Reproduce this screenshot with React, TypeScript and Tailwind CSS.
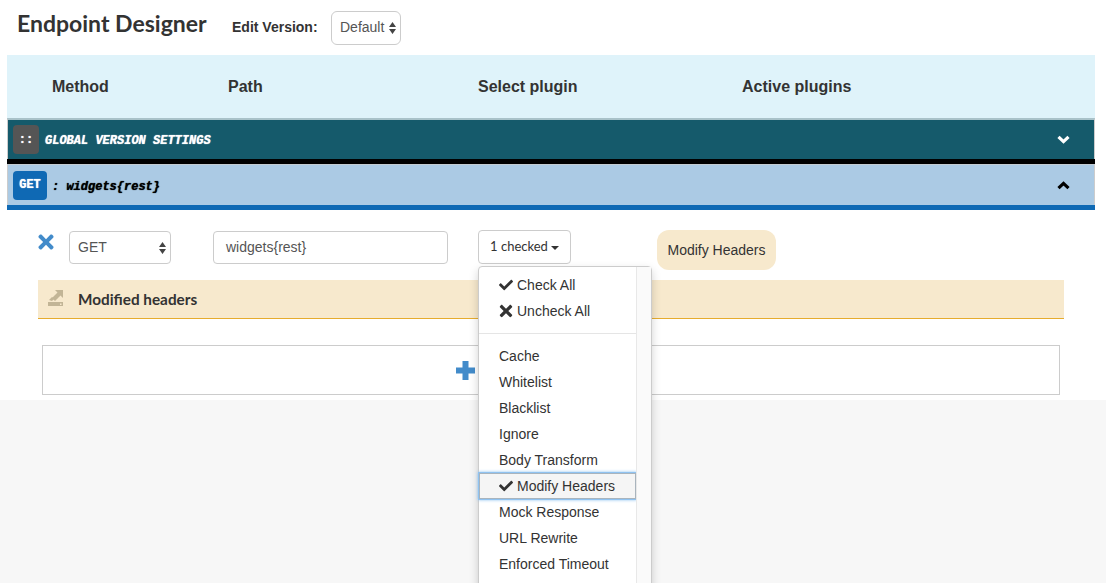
import { FaCheck, FaTimes } from "react-icons/fa";

const plugins = ["Cache", "Whitelist", "Blacklist", "Ignore", "Body Transform"];
const morePlugins = ["Mock Response", "URL Rewrite", "Enforced Timeout"];

function SelectArrows() {
  return (
    <svg width="7" height="12" viewBox="0 0 7 12" className="text-[#444]">
      <path d="M3.5 0 7 5H0z M0 7h7l-3.5 5z" fill="currentColor" />
    </svg>
  );
}

function Chevron({ up, color }: { up?: boolean; color: string }) {
  return (
    <svg width="13" height="9" viewBox="0 0 13 9">
      <path d={up ? "M1.5 7.2 6.5 2.4l5 4.8" : "M1.5 1.8l5 4.8 5-4.8"} fill="none" stroke={color} strokeWidth="3.2" />
    </svg>
  );
}

function PluginMenu() {
  return (
    <div className="absolute left-0 top-[36px] z-10 flex h-[400px] w-[174px] rounded-t-[4px] border border-[#ccc] bg-white text-[14px] leading-[26px] text-[#333] shadow-[0_4px_10px_rgba(0,0,0,0.18)]">
      <div className="w-[157px] pt-[5px]">
        <div className="flex items-center pl-[20px]">
          <FaCheck className="mr-[4px] h-[14px] w-[14px]" />
          Check All
        </div>
        <div className="flex items-center pl-[20px]">
          <FaTimes className="mr-[4px] h-[18px] w-[14px]" />
          Uncheck All
        </div>
        <div className="mb-[9px] mt-[9px] h-px bg-[#e5e5e5]" />
        {plugins.map((name) => (
          <div key={name} className="pl-[20px]">{name}</div>
        ))}
        <div className="flex h-[26px] items-center bg-[#f5f5f5] pl-[20px] shadow-[inset_0_0_0_1px_#a9b4bd,0_0_0_1px_#8fc2f0,0_0_3px_1px_#8fc2f0]">
          <FaCheck className="mr-[4px] h-[14px] w-[14px]" />
          Modify Headers
        </div>
        {morePlugins.map((name) => (
          <div key={name} className="pl-[20px]">{name}</div>
        ))}
      </div>
      <div className="flex-1 border-l border-[#e8e8e8] bg-[#fafafa]" />
    </div>
  );
}

export default function App() {
  return (
    <div className="h-[583px] overflow-hidden bg-[#f7f7f7] font-['Liberation_Sans',Arial,sans-serif] text-[#333]">
      <div className="h-[400px] bg-white">
        <div className="flex h-[55px] items-center pl-[17px]">
          <h1 className="w-[215px] pb-[9px] font-['Lato',sans-serif] text-[23px] font-bold text-[#333]">Endpoint Designer</h1>
          <span className="w-[99px] text-[14px] font-bold">Edit Version:</span>
          <div className="flex h-[34px] w-[70px] items-center justify-between rounded-[6px] border border-[#ccc] pl-[8px] pr-[4px] text-[14px] text-[#555]">
            Default
            <SelectArrows />
          </div>
        </div>

        <div className="mx-[7px] w-[1088px]">
          <div className="flex h-[63px] items-center bg-[#dff3fa] pl-[45px] pt-[1px] text-[16px] font-bold">
            <span className="w-[176px]">Method</span>
            <span className="w-[250px]">Path</span>
            <span className="w-[264px]">Select plugin</span>
            <span>Active plugins</span>
          </div>

          <div className="flex h-[41px] items-center border-x border-t-2 border-x-[#ccc] border-t-[#a9c2c9] bg-[#155a6b] pl-[5px] pr-[24px] font-['Liberation_Mono',monospace] text-[12px] font-bold italic text-white [text-shadow:0_0_1px_#fff]">
            <span className="mr-[6px] flex h-[29px] w-[26px] items-center justify-center rounded-[4px] bg-[#555] not-italic">::</span>
            <span className="flex-1 pt-[3px]">GLOBAL VERSION SETTINGS</span>
            <Chevron color="#fff" />
          </div>
          <div className="h-[5px] bg-black" />

          <div className="flex h-[41px] items-center border-x border-t border-x-[#ccc] border-t-[#c4ccd2] bg-[#abcae4] pl-[5px] pr-[24px] font-['Liberation_Mono',monospace] text-[12px] font-bold italic text-black [text-shadow:0_0_1px_#000]">
            <span className="mr-[5px] flex h-[29px] w-[34px] items-center justify-center rounded-[4px] bg-[#0f69b4] not-italic text-white [text-shadow:0_0_1px_#fff]">GET</span>
            <span className="flex-1 pt-[4px]">: widgets{"{rest}"}</span>
            <Chevron up color="#000" />
          </div>
          <div className="h-[5px] bg-[#0f69b4]" />

          <div className="px-[31px] pt-[20px]">
            <div className="flex h-[50px] items-start text-[14px]">
              <FaTimes className="mr-[15px] mt-[1px] h-[22px] w-[16px] text-[#428bca]" />
              <div className="mr-[42px] mt-px flex h-[33px] w-[102px] items-center justify-between rounded-[4px] border border-[#ccc] pl-[8px] pr-[4px] text-[#555]">
                GET
                <SelectArrows />
              </div>
              <div className="mr-[30px] mt-px flex h-[33px] w-[235px] items-center rounded-[4px] border border-[#ccc] pl-[12px] text-[#555]">
                widgets{"{rest}"}
              </div>
              <div className="relative mr-[86px]">
                <div className="flex h-[34px] w-[93px] items-center justify-center rounded-[4px] border border-[#ccc] pb-[1px] font-['Lato',sans-serif] text-[13px] text-[#333]">
                  1 checked
                  <span className="ml-[3px] mt-[3px] h-0 w-0 border-x-[4px] border-t-[4px] border-x-transparent border-t-[#333]" />
                </div>
                <PluginMenu />
              </div>
              <div className="flex h-[40px] w-[119px] items-center justify-center rounded-[12px] bg-[#f7e9cd]">Modify Headers</div>
            </div>

            <div className="flex h-[39px] w-[1026px] items-center border-b border-[#e6ac2e] bg-[#f7e9cd] pl-[10px]">
              <svg width="15" height="16" viewBox="0 0 15 16" className="mb-[2px] mr-[15px]">
                <path d="M7 0h8v8l-2.5-2.5L7 11 4 8l5.5-5.5z M1 10l3-3 2 2-2 2z" fill="#c2b596" />
                <path d="M0 12h15v4H0z" fill="#c2b596" />
                <path d="M12 13.5h1.5V15H12z" fill="#f7e9cd" />
              </svg>
              <span className="pt-[1px] font-['Lato',sans-serif] text-[15.3px] font-bold text-[#333]">Modified headers</span>
            </div>

            <div className="ml-[4px] mt-[26px] flex h-[50px] w-[1018px] items-center border border-[#ccc] bg-white pl-[413px]">
              <svg width="19" height="19" viewBox="0 0 19 19">
                <path d="M6.5 0h6v6.5H19v6h-6.5V19h-6v-6.5H0v-6h6.5z" fill="#428bca" />
              </svg>
            </div>
          </div>
        </div>
      </div>
    </div>
  );
}
